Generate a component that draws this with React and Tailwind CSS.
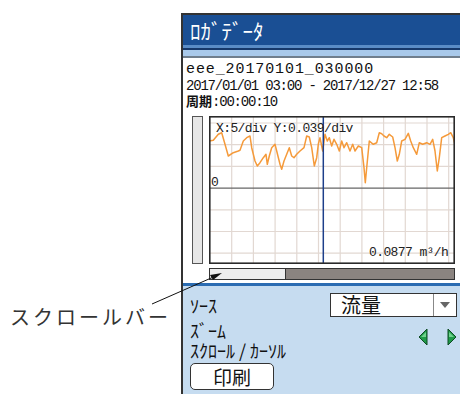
import React from 'react';

const MONO = 'font-[family-name:Liberation_Mono,Noto_Sans_CJK_JP,monospace]';
const JP = 'font-[family-name:Noto_Sans_CJK_JP,sans-serif]';

// traced from the screen, in 3x zoom coords
const trace = [
  [88,120],[100,118],[115,100],[125,95],[135,130],[145,165],[160,155],[175,150],[180,148],[190,120],
  [200,110],[210,105],[215,140],[225,180],[232,195],[240,185],[250,170],[258,160],[262,190],[268,165],
  [275,140],[285,130],[290,150],[300,190],[305,205],[312,180],[320,160],[328,140],[335,165],[342,170],
  [350,160],[360,150],[372,140],[380,105],[388,108],[395,140],[403,195],[410,170],[415,130],[420,110],
  [428,150],[435,100],[442,120],[448,110],[455,135],[462,115],[470,130],[478,150],[485,120],[492,140],
  [500,125],[510,150],[518,130],[525,150],[535,135],[545,140],[552,200],[556,245],[560,200],[568,120],
  [580,130],[590,125],[598,95],[605,98],[612,105],[620,110],[628,100],[638,108],[645,140],[652,180],
  [658,160],[665,120],[675,115],[685,97],[692,120],[700,140],[710,160],[718,125],[728,130],[740,125],
  [750,130],[758,115],[765,150],[772,210],[778,170],[785,110],[795,105],[805,100],[812,95],[820,110],[826,135],
];
const linePts = trace.map(([x, y]) => `${(x / 3 - 29).toFixed(1)},${(y / 3 - 15).toFixed(1)}`).join(' ');

function Chart() {
  const vx = Array.from({ length: 11 }, (_, i) => 22.7 + 21.7 * i);
  const hy = Array.from({ length: 7 }, (_, i) => 7 + 21.7 * i);
  return (
    <div className="relative w-[246px] h-[148px]">
      <svg width="246" height="148" className="block">
        <rect x="0" y="0" width="246" height="148" fill="#fff" />
        {vx.map((x) => (
          <line key={x} x1={x} y1="0" x2={x} y2="148" stroke="#e2d8d2" strokeWidth="1.2" />
        ))}
        {hy.map((y, i) => (
          <line key={y} x1="0" y1={y} x2="246" y2={y} stroke={i === 3 ? '#666' : '#e2d8d2'} strokeWidth="1.2" />
        ))}
        <polyline points={linePts} fill="none" stroke="#f59a3a" strokeWidth="1.5" strokeLinejoin="round" />
        <line x1="114.3" y1="0" x2="114.3" y2="148" stroke="#1d3f8a" strokeWidth="1.5" />
        <rect x="0.8" y="0.8" width="244.4" height="146.4" fill="none" stroke="#2a2a2a" strokeWidth="1.6" />
      </svg>
      <span className={`absolute left-[7px] top-[6px] text-[13px] leading-none tracking-[-0.6px] text-[#222] ${MONO}`}>
        X:5/div Y:0.039/div
      </span>
      <span className={`absolute left-[2px] top-[60px] text-[13px] leading-none text-[#222] ${MONO}`}>0</span>
      <span className={`absolute left-[160px] top-[130px] text-[13px] leading-none tracking-[-0.6px] text-[#222] ${MONO}`}>
        0.0877 m³/h
      </span>
    </div>
  );
}

function GreenArrow({ dir }) {
  return (
    <svg width="10" height="18" viewBox="0 0 10 18">
      {dir === 'left' ? (
        <>
          <polygon points="9,1 1,9 9,17" fill="#1f9a48" stroke="#0d4a22" strokeWidth="1" />
          <polygon points="8,4 3,9 8,9" fill="#6fd18d" />
        </>
      ) : (
        <>
          <polygon points="1,1 9,9 1,17" fill="#1f9a48" stroke="#0d4a22" strokeWidth="1" />
          <polygon points="2,4 7,9 2,9" fill="#6fd18d" />
        </>
      )}
    </svg>
  );
}

export default function App() {
  return (
    <div className="relative w-[460px] h-[394px] overflow-hidden bg-white flex">
      {/* annotation */}
      <div className="w-[181px] shrink-0 pt-[307px] pl-[10px]">
        <span className={`text-[20px] leading-none tracking-[3px] text-[#333] ${JP}`}>スクロールバー</span>
      </div>

      {/* device screen */}
      <div className="mt-[13px] w-[279px] shrink-0 border-l-2 border-t-2 border-[#333] flex flex-col">
        <div className={`h-[30px] bg-[#1a4f94] flex items-center pl-[7px] text-white text-[21px] leading-none ${JP}`}>
          ﾛｶﾞﾃﾞｰﾀ
        </div>
        <div className="h-[3px] bg-[#5a8cc6]" />
        <div className="h-[2px] bg-[#16386a]" />
        <div className="h-[6px] bg-[#a9c9ea]" />
        <div className="h-[2px] bg-[#707e8c]" />

        <div className="bg-white pt-[4px] pl-[3px] h-[225px] flex flex-col">
          <div className={`text-[15px] leading-[16px] tracking-[0.9px] text-[#111] ${MONO}`}>eee_20170101_030000</div>
          <div className={`text-[14px] leading-[16px] tracking-[-1.2px] text-[#111] ${MONO}`}>
            2017/01/01 03:00 - 2017/12/27 12:58
          </div>
          <div className={`text-[14px] leading-[16px] tracking-[-1.2px] text-[#111] ${MONO}`}>
            <span className="font-bold tracking-[0px] text-[13px]">周期</span>:00:00:10
          </div>

          <div className="mt-[5px] flex gap-[6px] pl-[6px]">
            <div className="w-[11px] h-[148px] bg-[#e6e6e6] border border-[#555]" />
            <div className="flex flex-col gap-[4px]">
              <Chart />
              <div className="flex h-[12px] border border-[#333]">
                <div className="w-[76px] bg-[#ededed] border-r border-[#333]" />
                <div className="flex-1 bg-[#8b8480]" />
              </div>
            </div>
          </div>
        </div>

        <div className="h-[3px] bg-[#2b6cb2]" />
        <div className={`flex-1 bg-[#c6dcf0] pl-[7px] pr-[3px] ${JP} text-[#111]`}>
          <div className="flex items-center justify-between mt-[7px]">
            <span className="text-[18px] leading-none">ｿｰｽ</span>
            <div className="w-[127px] h-[24px] bg-white border border-[#333] flex">
              <span className="flex-1 text-[20px] leading-[22px] pl-[10px]">流量</span>
              <div className="w-[23px] border-l border-[#888] flex items-center justify-center">
                <svg width="10" height="6" viewBox="0 0 10 6">
                  <polygon points="0,0 10,0 5,6" fill="#666" />
                </svg>
              </div>
            </div>
          </div>
          <div className="flex items-center justify-between mt-[3px]">
            <div className="flex flex-col">
              <span className="text-[18px] leading-[20px]">ｽﾞｰﾑ</span>
              <span className="text-[18px] leading-[20px]">ｽｸﾛｰﾙ / ｶｰｿﾙ</span>
            </div>
            <div className="flex gap-[19px] -mt-[6px]">
              <GreenArrow dir="left" />
              <GreenArrow dir="right" />
            </div>
          </div>
          <button className="mt-[3px] w-[84px] h-[27px] bg-white border border-[#333] rounded-[5px] text-[19px] leading-none">
            印刷
          </button>
        </div>
      </div>

      {/* leader line */}
      <svg className="absolute left-0 top-0 pointer-events-none" width="460" height="394">
        <line x1="152" y1="304" x2="218" y2="275" stroke="#111" strokeWidth="1" />
        <polygon points="222,273 210,275 213,280" fill="#111" />
      </svg>
    </div>
  );
}
